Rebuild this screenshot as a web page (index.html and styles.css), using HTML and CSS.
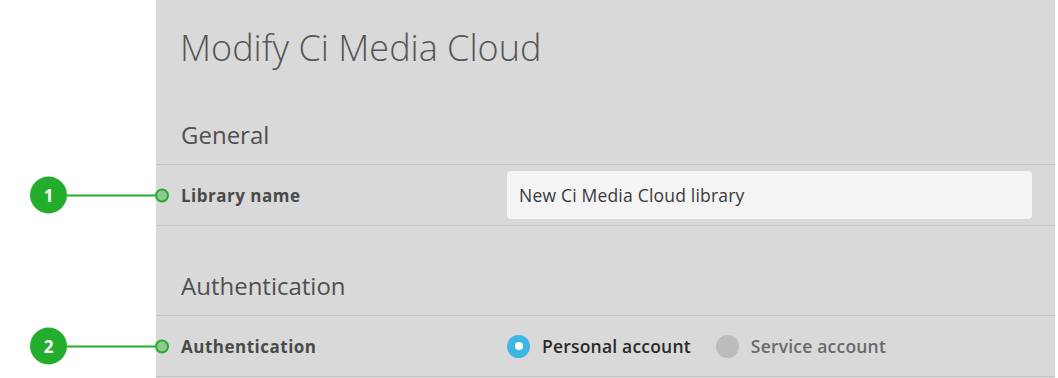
FILE: index.html
```html
<!DOCTYPE html>
<html lang="en">
<head>
    <meta charset="UTF-8">
    <title>Modify Ci Media Cloud</title>
    <link rel="stylesheet" href="styles.css">
</head>
<body>
    <div class="panel">
        <h1 class="panel-title">Modify Ci Media Cloud</h1>

        <h2 class="section-title">General</h2>
        <div class="field-row">
            <div class="callout">
                <span class="callout-badge">1</span>
                <span class="callout-line"></span>
                <span class="callout-dot"></span>
            </div>
            <label class="field-label" for="libraryName">Library name</label>
            <input type="text" id="libraryName" class="field-input" value="New Ci Media Cloud library">
        </div>

        <h2 class="section-title section-title--spaced">Authentication</h2>
        <div class="field-row">
            <div class="callout">
                <span class="callout-badge">2</span>
                <span class="callout-line"></span>
                <span class="callout-dot"></span>
            </div>
            <span class="field-label">Authentication</span>
            <div class="radio-group">
                <label class="radio radio--checked">
                    <span class="radio-mark"></span>
                    Personal account
                </label>
                <label class="radio">
                    <span class="radio-mark"></span>
                    Service account
                </label>
            </div>
        </div>
    </div>
</body>
</html>
```

FILE: styles.css
```css
:root {
    --panel: #d9d9d9;
    --rule: #c2c2c2;
    --text: #555555;
    --label: #4a4a4a;
    --green: #23ad2c;
    --blue: #3cb6e3;
}

* {
    margin: 0;
    padding: 0;
    box-sizing: border-box;
}

body {
    background-color: white;
    font-family: 'Open Sans', 'Noto Sans', sans-serif;
    color: var(--text);
}

.panel {
    background-color: var(--panel);
    margin: 0 3px 0 156px;
    min-height: 378px;
    padding-top: 27px;
}

.panel-title {
    font-size: 36px;
    font-weight: 300;
    line-height: 42px;
    padding-left: 24px;
    margin-bottom: 51px;
    color: #555;
}

.section-title {
    font-size: 24px;
    font-weight: 400;
    line-height: 30px;
    padding: 0 25px 14px;
    border-bottom: 1px solid var(--rule);
    color: #505050;
}

.section-title--spaced {
    margin-top: 45px;
}

.field-row {
    position: relative;
    display: flex;
    align-items: center;
    min-height: 61px;
    padding: 6px 23px 6px 25px;
    border-bottom: 1px solid var(--rule);
}

.field-label {
    width: 326px;
    flex-shrink: 0;
    font-size: 17px;
    font-weight: 700;
    letter-spacing: 0.5px;
    color: var(--label);
}

.field-input {
    flex: 1;
    height: 48px;
    border: none;
    border-radius: 4px;
    background-color: #f4f4f4;
    padding: 0 12px;
    font-family: inherit;
    font-size: 17.5px;
    letter-spacing: 0.2px;
    color: #3a3a3a;
}

/* annotation markers sitting over the left edge of the panel */
.callout {
    position: absolute;
    left: -126px;
    top: 50%;
    transform: translateY(-50%);
    width: 139px;
    display: flex;
    align-items: center;
}

.callout-badge {
    width: 37px;
    height: 37px;
    border-radius: 50%;
    background-color: var(--green);
    color: white;
    font-size: 17px;
    font-weight: 700;
    display: flex;
    align-items: center;
    justify-content: center;
    flex-shrink: 0;
}

.callout-line {
    flex: 1;
    height: 2px;
    background-color: var(--green);
}

.callout-dot {
    width: 14px;
    height: 14px;
    border-radius: 50%;
    border: 2px solid var(--green);
    background-color: #8fc98f;
    flex-shrink: 0;
}

.radio-group {
    display: flex;
    align-items: center;
    gap: 25px;
}

.radio {
    display: flex;
    align-items: center;
    gap: 12px;
    font-size: 17.5px;
    font-weight: 600;
    letter-spacing: 0.2px;
    color: #6a6a6a;
}

.radio-mark {
    width: 23px;
    height: 23px;
    border-radius: 50%;
    background-color: #bcbcbf;
    display: flex;
    align-items: center;
    justify-content: center;
}

.radio--checked {
    color: #2a2a2a;
}

.radio--checked .radio-mark {
    background-color: var(--blue);
}

.radio--checked .radio-mark::after {
    content: '';
    width: 8px;
    height: 8px;
    border-radius: 50%;
    background-color: white;
}
```
